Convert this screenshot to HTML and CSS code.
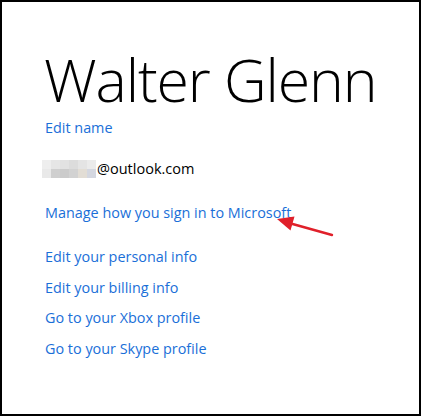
FILE: index.html
```html
<!DOCTYPE html>
<html>
<head>
<meta charset="utf-8">
<link rel="stylesheet" href="styles.css">
</head>
<body>
<div class="frame">
  <h1 class="name">Walter Glenn</h1>
  <a class="link first" href="#">Edit name</a>
  <div class="email">
    <span class="blur">
      <i style="background:#eeeeee"></i><i style="background:#e6e6e6"></i><i style="background:#e2e2e2"></i><i style="background:#dcdcdc"></i><i style="background:#e4e4e4"></i><i style="background:#ebebeb"></i>
      <i style="background:#e9e9e9"></i><i style="background:#cfcfcf"></i><i style="background:#cbcbcb"></i><i style="background:#d2d2d2"></i><i style="background:#e2ddd5"></i><i style="background:#d4d7e0"></i>
    </span>@outlook.com
  </div>
  <div class="signin">
    <a class="link" href="#">Manage how you sign in to Microsoft</a>
    <svg class="arrow" width="64" height="32" viewBox="0 0 64 32">
      <line x1="57" y1="26" x2="14" y2="14" stroke="#e0202a" stroke-width="2.4" stroke-linecap="round"/>
      <polygon points="2,10 19.5,7.5 15.5,21.5" fill="#e0202a"/>
    </svg>
  </div>
  <ul class="links">
    <li><a class="link" href="#">Edit your personal info</a></li>
    <li><a class="link" href="#">Edit your billing info</a></li>
    <li><a class="link" href="#">Go to your Xbox profile</a></li>
    <li><a class="link" href="#">Go to your Skype profile</a></li>
  </ul>
</div>
</body>
</html>
```
FILE: styles.css
```css
html, body { margin: 0; padding: 0; background: #fff; }
.frame {
  box-sizing: border-box;
  width: 421px;
  height: 416px;
  border: 2px solid #000;
  padding: 47px 0 0 43px;
  font-family: "Open Sans", "Noto Sans", sans-serif;
  display: flex;
  flex-direction: column;
  align-items: flex-start;
}
.name {
  margin: 0 0 0 -1px;
  font-weight: 300;
  font-size: 59px;
  line-height: 60px;
  color: #000;
  letter-spacing: -1.1px;
}
.link {
  color: #1a6fd8;
  text-decoration: none;
  font-size: 14.4px;
  line-height: 20px;
}
.first { margin-top: 9px; }
.email {
  margin-top: 21px;
  display: flex;
  align-items: center;
  font-size: 14.5px;
  line-height: 20px;
  color: #000;
}
.blur {
  display: grid;
  grid-template-columns: repeat(6, 9px);
  grid-template-rows: 9px 9px;
  margin-left: -3px;
  margin-right: 1px;
}
.blur i { display: block; }
.signin {
  position: relative;
  margin-top: 22px;
}
.arrow {
  position: absolute;
  left: 230px;
  top: 8px;
}
.links {
  list-style: none;
  margin: 23px 0 0 0;
  padding: 0;
  display: flex;
  flex-direction: column;
  gap: 10.5px;
}
.links li { line-height: 20px; height: 20px; }
```
